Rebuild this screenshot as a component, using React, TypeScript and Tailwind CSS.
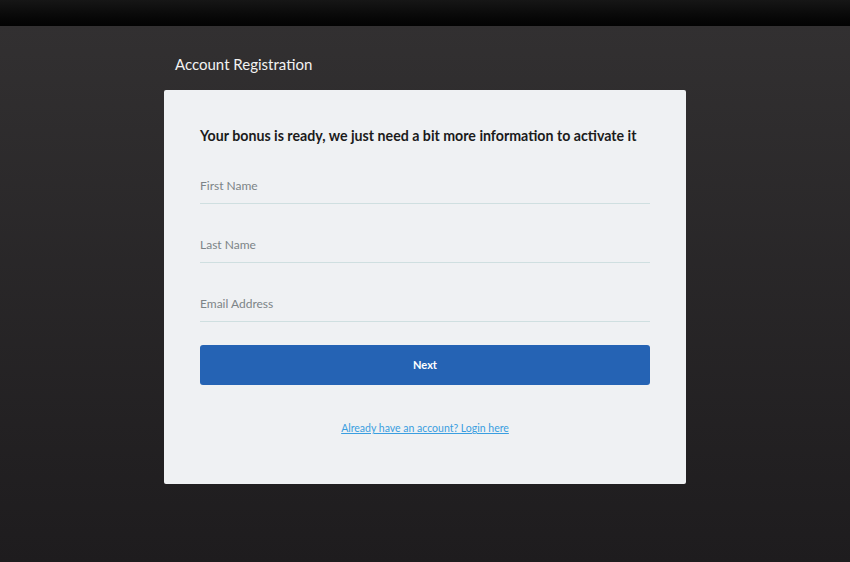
import React from 'react';

const FIELDS = ['First Name', 'Last Name', 'Email Address'];

export default function App() {
  return (
    <div
      className="w-[850px] h-[562px] flex flex-col bg-gradient-to-b from-[#333132] to-[#1e1c1e] overflow-hidden"
      style={{ fontFamily: 'Lato, "Open Sans", sans-serif' }}
    >
      {/* Top bar */}
      <div className="h-[26px] shrink-0 bg-gradient-to-b from-[#161616] to-[#030303]" />

      <div className="w-[522px] ml-[164px] flex flex-col">
        <h1 className="mt-[28px] ml-[11px] text-[15px] leading-[20px] text-[#f2f2f2]">
          Account Registration
        </h1>

        {/* Card */}
        <div className="mt-[16px] h-[394px] bg-[#eff1f3] rounded-[2px] px-[36px] pt-[36px]">
          <h2 className="text-[14.2px] leading-[20px] font-bold text-[#1b1b1b]">
            Your bonus is ready, we just need a bit more information to activate it
          </h2>

          <div className="mt-[21px] flex flex-col gap-[22px]">
            {FIELDS.map(label => (
              <div key={label} className="h-[37px] pt-[2px] border-b border-[#cfdfe0] flex items-center">
                <input
                  placeholder={label}
                  className="w-full bg-transparent outline-none text-[12px] text-[#555] placeholder:text-[#7c8487]"
                />
              </div>
            ))}
          </div>

          <button className="mt-[23px] w-full h-[40px] rounded-[3px] bg-[#2563b4] text-white text-[11px] font-bold">
            Next
          </button>

          <div className="mt-[29px] text-center">
            <a href="#" className="text-[10.5px] text-[#3a9ee0] underline">
              Already have an account? Login here
            </a>
          </div>
        </div>
      </div>
    </div>
  );
}
